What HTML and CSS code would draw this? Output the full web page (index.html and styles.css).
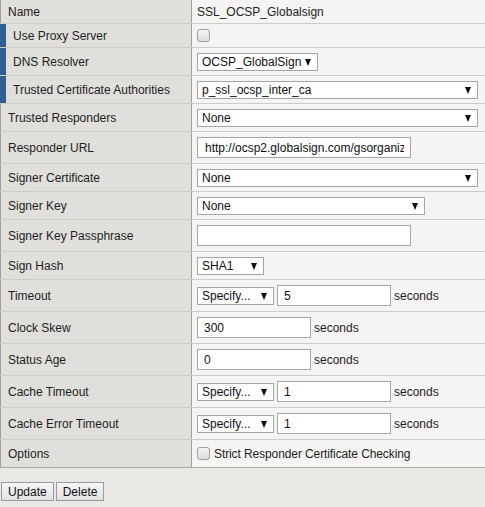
FILE: index.html
```html
<!DOCTYPE html>
<html>
<head>
<meta charset="utf-8">
<link rel="stylesheet" href="styles.css">
</head>
<body>
<div class="props">
  <div class="row h24"><div class="lbl">Name</div><div class="val">SSL_OCSP_Globalsign</div></div>
  <div class="row h24 req"><div class="lbl">Use Proxy Server</div><div class="val"><input type="checkbox" class="cb"></div></div>
  <div class="row req"><div class="lbl">DNS Resolver</div><div class="val"><span class="sel"><select class="w121"><option>OCSP_GlobalSign</option></select></span></div></div>
  <div class="row req"><div class="lbl">Trusted Certificate Authorities</div><div class="val"><span class="sel"><select class="w281"><option>p_ssl_ocsp_inter_ca</option></select></span></div></div>
  <div class="row"><div class="lbl">Trusted Responders</div><div class="val"><span class="sel"><select class="w281"><option>None</option></select></span></div></div>
  <div class="row h32"><div class="lbl">Responder URL</div><div class="val"><input type="text" class="txt url w214" value="http://ocsp2.globalsign.com/gsorganizationvalsha2g2"></div></div>
  <div class="row"><div class="lbl">Signer Certificate</div><div class="val"><span class="sel"><select class="w281"><option>None</option></select></span></div></div>
  <div class="row"><div class="lbl">Signer Key</div><div class="val"><span class="sel"><select class="w228"><option>None</option></select></span></div></div>
  <div class="row h32"><div class="lbl">Signer Key Passphrase</div><div class="val"><input type="password" class="txt w214"></div></div>
  <div class="row"><div class="lbl">Sign Hash</div><div class="val"><span class="sel"><select class="w67"><option>SHA1</option></select></span></div></div>
  <div class="row h32"><div class="lbl">Timeout</div><div class="val"><span class="sel"><select class="w77"><option>Specify...</option></select></span><input type="text" class="txt w114" value="5"><span class="unit">seconds</span></div></div>
  <div class="row h32"><div class="lbl">Clock Skew</div><div class="val"><input type="text" class="txt w114" value="300"><span class="unit">seconds</span></div></div>
  <div class="row h32"><div class="lbl">Status Age</div><div class="val"><input type="text" class="txt w114" value="0"><span class="unit">seconds</span></div></div>
  <div class="row h32"><div class="lbl">Cache Timeout</div><div class="val"><span class="sel"><select class="w77"><option>Specify...</option></select></span><input type="text" class="txt w114" value="1"><span class="unit">seconds</span></div></div>
  <div class="row h32"><div class="lbl">Cache Error Timeout</div><div class="val"><span class="sel"><select class="w77"><option>Specify...</option></select></span><input type="text" class="txt w114" value="1"><span class="unit">seconds</span></div></div>
  <div class="row last"><div class="lbl">Options</div><div class="val"><label class="opt"><input type="checkbox" class="cb">Strict Responder Certificate Checking</label></div></div>
</div>
<div class="actions">
  <button class="btn">Update</button>
  <button class="btn">Delete</button>
</div>
</body>
</html>
```
FILE: styles.css
```css
html, body {
  margin: 0;
  padding: 0;
  background: #eae8e5;
  font-family: "Liberation Sans", Arial, sans-serif;
  font-size: 12px;
  color: #1e1e1e;
}
.props {
  width: 485px;
}
.row {
  display: flex;
  height: 28px;
  box-sizing: border-box;
  border-bottom: 1px solid #cdcbc8;
}
.row.h24 { height: 24px; }
.row.h32 { height: 32px; }
.row.last { border-bottom-color: #a9a9a9; }
.lbl {
  width: 192px;
  flex: none;
  box-sizing: border-box;
  background: #e0dfdc;
  border-left: 1px solid #9c9c9c;
  border-right: 1px solid #a0a0a0;
  padding-left: 7px;
  display: flex;
  align-items: center;
}
.req .lbl {
  border-left: 6px solid #2f6192;
}
.val {
  flex: 1;
  background: #f5f4f2;
  padding-left: 5px;
  display: flex;
  align-items: center;
  gap: 3px;
}
.sel {
  position: relative;
  display: inline-block;
  height: 18px;
}
.sel select {
  -webkit-appearance: none;
  appearance: none;
  box-sizing: border-box;
  height: 18px;
  margin: 0;
  border: 1px solid #a6a6a6;
  border-radius: 0;
  background: #fff;
  font-family: "Liberation Sans", Arial, sans-serif;
  font-size: 12px;
  color: #111;
  padding: 0 16px 0 4px;
}
.sel::after {
  content: "";
  position: absolute;
  right: 7px;
  top: 6px;
  width: 0;
  height: 0;
  border-top: 7px solid #111;
  border-left: 3px solid transparent;
  border-right: 3px solid transparent;
  pointer-events: none;
}
.w67 { width: 67px; }
.w77 { width: 77px; }
.w121 { width: 121px; }
.w228 { width: 228px; }
.w281 { width: 281px; }
.txt {
  box-sizing: border-box;
  height: 21px;
  margin: 0;
  border: 1px solid #a6a6a6;
  background: #fff;
  font-family: "Liberation Sans", Arial, sans-serif;
  font-size: 12px;
  color: #111;
  padding: 0 6px;
}
.txt.url { padding-left: 7px; }
.w114 { width: 114px; }
.w214 { width: 214px; }
.cb {
  -webkit-appearance: none;
  appearance: none;
  box-sizing: border-box;
  width: 13px;
  height: 13px;
  margin: 0;
  border: 1px solid #9e9e9e;
  border-radius: 3px;
  background: linear-gradient(#f4f4f4, #dcdcdc);
}
.opt {
  display: flex;
  align-items: center;
  gap: 4px;
  letter-spacing: -0.1px;
}
.actions {
  padding: 14px 0 0 1px;
  display: flex;
  gap: 2px;
}
.btn {
  box-sizing: border-box;
  height: 19px;
  margin: 0;
  padding: 0 6px;
  border: 1px solid #9a9a9a;
  border-radius: 0;
  background: linear-gradient(#f6f6f6, #e2e2e2);
  font-family: "Liberation Sans", Arial, sans-serif;
  font-size: 12px;
  color: #111;
}
```
